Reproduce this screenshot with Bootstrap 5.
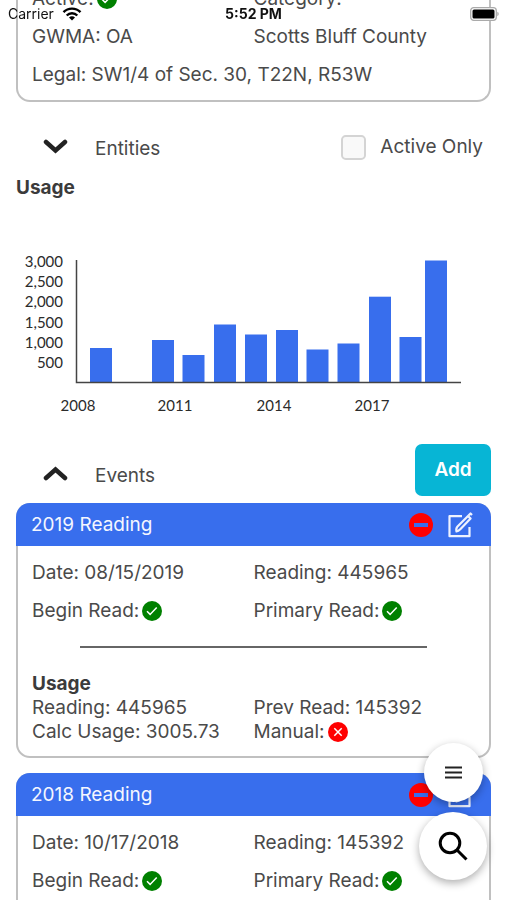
<!DOCTYPE html>
<html lang="en">
<head>
<meta charset="utf-8">
<meta name="viewport" content="width=device-width, initial-scale=1">
<title>Well readings</title>
<link href="https://cdn.jsdelivr.net/npm/bootstrap@5.3.0/dist/css/bootstrap.min.css" rel="stylesheet">
<style>
  body { font-family: Inter, "Liberation Sans", sans-serif; font-size: 19px; line-height: 24px; color: #4a4a4a; background: #fff; }
  .screen { scrollbar-width: none; }
  .screen::-webkit-scrollbar { display: none; }
  .scrolled { margin-top: -20px; }
  .status { height: 28px; font-size: 14px; line-height: 28px; color: #111; pointer-events: none; }
  .status-side { flex: 1 1 0; }
  .panel { --bs-card-border-width: 2px; --bs-card-border-color: #c0c0c0; --bs-card-border-radius: 14px; --bs-card-inner-border-radius: 12px; --bs-card-color: #4a4a4a; }
  .panel-rows { padding: 0 14px 6px; }
  .line { min-height: 38px; display: flex; align-items: center; gap: 3px; }
  .line-tight { min-height: 24px; display: flex; align-items: center; gap: 3px; }
  .section-row { min-height: 52px; padding-left: 27px; }
  .section-first { margin-top: 17px; }
  .toggle { gap: 27px; color: #4a4a4a; font-size: 19px; line-height: 24px; }
  .toggle-label { padding-top: 4px; }
  .only-box { width: 25px; height: 25px; margin: 0 14px 0 0; border: 2px solid #d4d4d4; border-radius: 3px; background-color: #f9f9f9; }
  .strong { font-weight: 700; color: #3b3b3b; }
  .block-title { font-size: 19px; line-height: 24px; margin: 5px 0 0; }
  .chart { font-family: Lato, sans-serif; font-size: 15px; fill: #2b2b2b; }
  .add { width: 76px; height: 52px; background: #07b5d5; color: #fff; font-size: 19px; font-weight: 600; border-radius: 7px; }
  .event { margin-top: 7px; }
  .event + .event { margin-top: 15px; }
  .event-head { height: 43px; margin: -2px -2px 0; padding: 0 18px 0 15px; background: #386eed; color: #f4f6ff; border-radius: 14px 14px 0 0; }
  .event-tools { gap: 14px; }
  .event-body { padding: 8px 14px 12px; }
  .rule { width: 347px; max-width: 80%; margin: 16px auto 24px; border-top: 2px solid #666; opacity: 1; }
  .fabs { right: 20px; bottom: 20px; gap: 10px; }
  .fab { background: #fff; box-shadow: 0 3px 9px rgba(0,0,0,.32); }
  .fab-sm { width: 59px; height: 59px; }
  .fab-lg { width: 68px; height: 68px; }
</style>
<script src="https://cdn.jsdelivr.net/npm/bootstrap@5.3.0/dist/js/bootstrap.bundle.min.js"></script>
</head>
<body>
<svg class="d-none" aria-hidden="true">
  <symbol id="yes" viewBox="0 0 20 20"><circle cx="10" cy="10" r="10" fill="#008000"/><path d="M5 10.3l3.1 3.1 6.6-6.8" fill="none" stroke="#fff" stroke-width="1.5"/></symbol>
  <symbol id="no" viewBox="0 0 20 20"><circle cx="10" cy="10" r="10" fill="#f00"/><path d="M6.3 6.3l7.4 7.4M13.7 6.3l-7.4 7.4" fill="none" stroke="#fff" stroke-width="1.5"/></symbol>
  <symbol id="remove" viewBox="0 0 24 24"><circle cx="12" cy="12" r="12" fill="#f00"/><rect x="5" y="10" width="14" height="4" fill="#386eed"/></symbol>
  <symbol id="edit" viewBox="0 0 26 26"><g fill="none" stroke="#eef2ff" stroke-width="2.2" stroke-linejoin="round"><path d="M15 4.200H2.500v20h20V15"/><path d="M9.500 19.500c-.5-2 0-4 1-5L21 4l2.600 2.600-10.300 10.600c-1 1-2 2-3.800 2.300z"/><path d="M21.500 3.500l2-2 1.500 1.500"/></g></symbol>
</svg>

<header class="status fixed-top d-flex px-2">
  <div class="status-side d-flex align-items-center gap-2"><span>Carrier</span>
    <svg width="20" height="14" viewBox="0 0 20 14" aria-label="Wi-Fi"><g fill="none" stroke="#000" stroke-width="2.400"><path d="M1.500 5.200a12 12 0 0 1 17 0"/><path d="M4.700 8.500a7.500 7.500 0 0 1 10.600 0"/></g><path d="M10 13.500L7 10.500a4.200 4.200 0 0 1 6 0z"/></svg>
  </div>
  <span class="fw-bold">5:52 PM</span>
  <div class="status-side d-flex align-items-center justify-content-end">
    <svg width="30" height="14" viewBox="0 0 30 14" aria-label="Battery"><rect x="1.700" y=".7" width="25.600" height="12.600" rx="3" fill="#fff" stroke="#aaa" stroke-width="1.300"/><rect x="3.500" y="2.500" width="22" height="9" rx="1.500"/><path d="M28.300 4.800a2.400 2.400 0 0 1 0 4.400z" fill="#aaa"/></svg>
  </div>
</header>

<main class="screen vh-100 overflow-auto px-3">
  <section class="panel card scrolled border-top-0 rounded-top-0">
    <div class="panel-rows">
      <div class="row g-0">
        <div class="col-6 line">Active: <svg width="20" height="20" role="img" aria-label="Yes"><use href="#yes"/></svg></div>
        <div class="col-6 line">Category:</div>
        <div class="col-6 line">GWMA: OA</div>
        <div class="col-6 line">Scotts Bluff County</div>
        <div class="col-12 line">Legal: SW1/4 of Sec. 30, T22N, R53W</div>
      </div>
    </div>
  </section>

  <div class="section-row section-first d-flex align-items-center justify-content-between pt-1">
    <button type="button" class="toggle btn p-0 border-0 d-flex align-items-center" aria-expanded="false">
      <svg width="25" height="16" viewBox="0 0 25 16"><path d="M3 3l9.500 8.500L22 3" fill="none" stroke="#222" stroke-width="4.500" stroke-linecap="round"/></svg><span class="toggle-label">Entities</span></button>
    <div class="d-flex align-items-center pe-2">
      <input class="only-box form-check-input" type="checkbox" id="activeOnly"><label for="activeOnly">Active Only</label>
    </div>
  </div>

  <h2 class="block-title strong">Usage</h2>
  <svg class="chart d-block w-100" viewBox="0 0 475 240" role="img" aria-label="Usage by year">
    <g text-anchor="end"><text x="47" y="67">3,000</text><text x="47" y="87">2,500</text><text x="47" y="107">2,000</text><text x="47" y="128">1,500</text><text x="47" y="148">1,000</text><text x="47" y="168">500</text></g>
    <g fill="#386eed">
      <rect x="74" y="148" width="22" height="34"/><rect x="136" y="140" width="22" height="42"/><rect x="166.500" y="155" width="22" height="27"/><rect x="198" y="124.500" width="22" height="57.500"/><rect x="229" y="134.500" width="22" height="47.500"/><rect x="260" y="130" width="22" height="52"/><rect x="290.500" y="149.500" width="22" height="32.500"/><rect x="321.500" y="143.500" width="22" height="38.500"/><rect x="353" y="96.700" width="22" height="85.300"/><rect x="383.500" y="137" width="22" height="45"/><rect x="409" y="60.500" width="22" height="121.500"/>
    </g>
    <path d="M60.500 60V182.500H445" fill="none" stroke="#444" stroke-width="1.500"/>
    <g text-anchor="middle"><text x="62" y="211">2008</text><text x="159" y="211">2011</text><text x="258" y="211">2014</text><text x="356" y="211">2017</text></g>
  </svg>

  <div class="section-row d-flex align-items-center justify-content-between mt-1">
    <button type="button" class="toggle btn p-0 pt-2 border-0 d-flex align-items-center" aria-expanded="true">
      <svg width="25" height="16" viewBox="0 0 25 16"><path d="M3 12l9.500-8.500L22 12" fill="none" stroke="#222" stroke-width="4.500" stroke-linecap="round"/></svg><span class="toggle-label">Events</span></button>
    <button type="button" class="add btn p-0 border-0">Add</button>
  </div>

  <article class="event panel card">
    <div class="event-head d-flex align-items-center">
      <span class="me-auto">2019 Reading</span>
      <div class="event-tools d-flex align-items-center">
        <button type="button" class="btn p-0 border-0 d-flex" aria-label="Remove"><svg width="24" height="24"><use href="#remove"/></svg></button>
        <button type="button" class="btn p-0 border-0 d-flex" aria-label="Edit"><svg width="26" height="26"><use href="#edit"/></svg></button>
      </div>
    </div>
    <div class="event-body">
      <div class="row g-0">
        <div class="col-6 line">Date: 08/15/2019</div>
        <div class="col-6 line">Reading: 445965</div>
        <div class="col-6 line">Begin Read: <svg width="20" height="20" role="img" aria-label="Yes"><use href="#yes"/></svg></div>
        <div class="col-6 line">Primary Read: <svg width="20" height="20" role="img" aria-label="Yes"><use href="#yes"/></svg></div>
      </div>
      <hr class="rule">
      <div class="row g-0">
        <div class="col-12 line-tight strong">Usage</div>
        <div class="col-6 line-tight">Reading: 445965</div>
        <div class="col-6 line-tight">Prev Read: 145392</div>
        <div class="col-6 line-tight">Calc Usage: 3005.73</div>
        <div class="col-6 line-tight">Manual: <svg width="20" height="20" role="img" aria-label="No"><use href="#no"/></svg></div>
      </div>
    </div>
  </article>

  <article class="event panel card">
    <div class="event-head d-flex align-items-center">
      <span class="me-auto">2018 Reading</span>
      <div class="event-tools d-flex align-items-center">
        <button type="button" class="btn p-0 border-0 d-flex" aria-label="Remove"><svg width="24" height="24"><use href="#remove"/></svg></button>
        <button type="button" class="btn p-0 border-0 d-flex" aria-label="Edit"><svg width="26" height="26"><use href="#edit"/></svg></button>
      </div>
    </div>
    <div class="event-body">
      <div class="row g-0">
        <div class="col-6 line">Date: 10/17/2018</div>
        <div class="col-6 line">Reading: 145392</div>
        <div class="col-6 line">Begin Read: <svg width="20" height="20" role="img" aria-label="Yes"><use href="#yes"/></svg></div>
        <div class="col-6 line">Primary Read: <svg width="20" height="20" role="img" aria-label="Yes"><use href="#yes"/></svg></div>
      </div>
    </div>
  </article>
</main>

<div class="fabs position-fixed d-flex flex-column align-items-center">
  <button type="button" class="fab fab-sm btn border-0 rounded-circle p-0 d-flex align-items-center justify-content-center" aria-label="Menu">
    <svg width="17" height="13" viewBox="0 0 17 13"><path d="M0 1.500h17M0 6.500h17M0 11.500h17" stroke="#222" stroke-width="2"/></svg></button>
  <button type="button" class="fab fab-lg btn border-0 rounded-circle p-0 d-flex align-items-center justify-content-center" aria-label="Search">
    <svg width="30" height="30" viewBox="0 0 30 30"><g fill="none" stroke="#000" stroke-width="3"><circle cx="12" cy="12" r="9.800"/><path d="M19 19l9.500 9.500"/></g></svg></button>
</div>
</body>
</html>
